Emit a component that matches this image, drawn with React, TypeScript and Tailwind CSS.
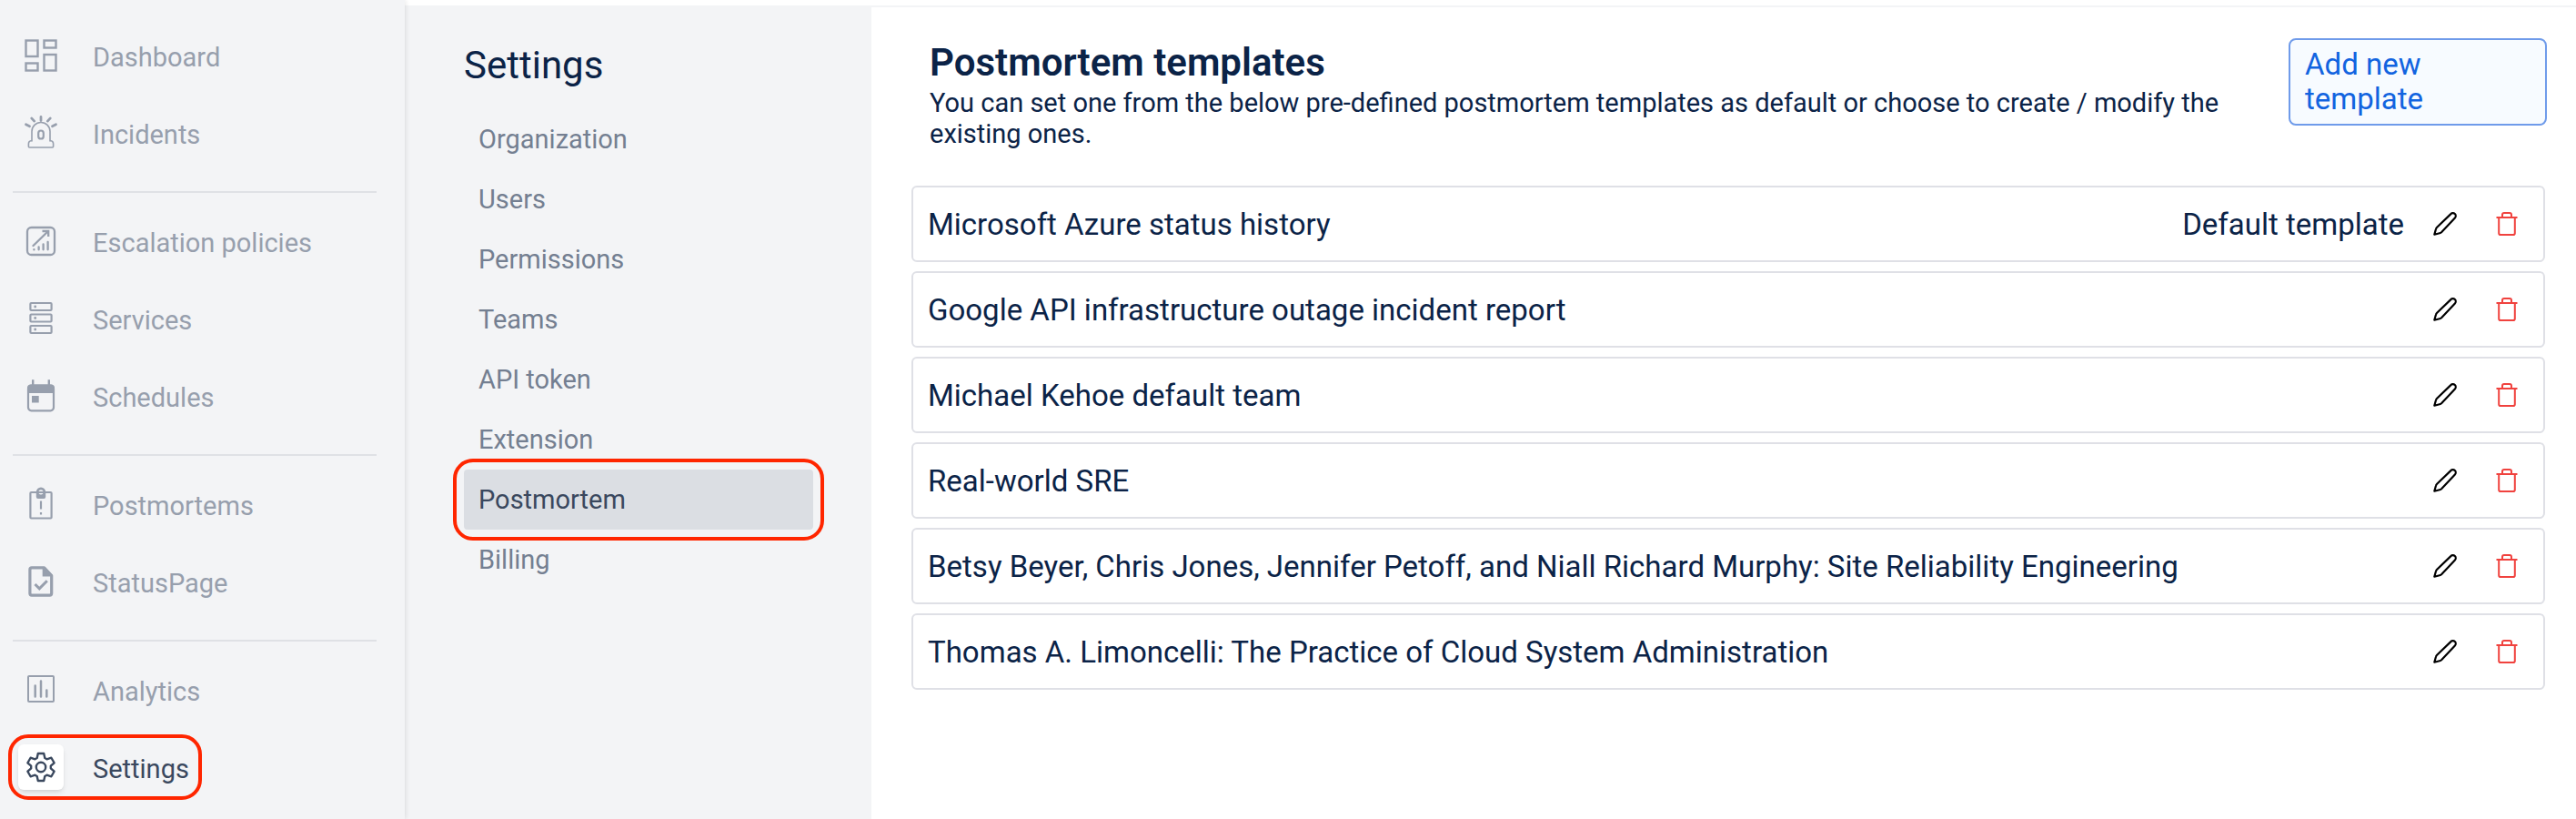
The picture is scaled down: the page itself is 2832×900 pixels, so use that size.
import type { ReactNode } from "react";

const stroke = { fill: "none", stroke: "currentColor" } as const;

function Glyph({ children }: { children: ReactNode }) {
  return (
    <svg viewBox="0 0 50 50" className="size-[50px]" aria-hidden="true">
      {children}
    </svg>
  );
}

const DashboardIcon = () => (
  <Glyph>
    <g {...stroke} strokeWidth="2.4">
      <rect x="8.5" y="8.5" width="13" height="17.5" />
      <rect x="28.5" y="8.5" width="13" height="8" />
      <rect x="8.5" y="33.5" width="13" height="8" />
      <rect x="28.5" y="24" width="13" height="17.5" />
    </g>
  </Glyph>
);

const SirenIcon = () => (
  <Glyph>
    <g {...stroke} strokeLinecap="round" strokeLinejoin="round">
      <path
        strokeWidth="1.6"
        d="M15 34V23.5a10 10 0 0 1 20 0V34M15 33.5c-2.5.3-3.6 1.6-3.6 3.5v3q0 1 1 1h25.200q1 0 1-1v-3c0-1.900-1.100-3.200-3.600-3.500"
      />
      <rect x="22.2" y="22.5" width="5.6" height="9" rx="2.8" strokeWidth="2.2" />
      <path strokeWidth="2.8" d="M25 7.5v4M14.700 8.900l3 3.200M35.300 8.900l-3 3.200M8.500 15.800l4 1.900M41.500 15.800l-4 1.900" />
    </g>
  </Glyph>
);

const EscalationIcon = () => (
  <Glyph>
    <g {...stroke} strokeWidth="2.3">
      <rect x="10" y="10" width="30" height="30" rx="4.5" />
      <path strokeLinecap="round" d="M16.500 30 32.500 14.500M17.400 34.200v.2M22.600 31.500v2.800M27.600 28.500v5.800M32.600 26v8.300" />
      <path d="M26.500 14h6.700v6" />
    </g>
  </Glyph>
);

const ServicesIcon = () => (
  <Glyph>
    {[8, 20.5, 33].map((y) => (
      <g key={y}>
        <rect x="13.4" y={y} width="23.2" height="8" rx="1" {...stroke} strokeWidth="2.2" />
        <circle cx="18.7" cy={y + 4} r="1.4" fill="currentColor" />
      </g>
    ))}
  </Glyph>
);

const ScheduleIcon = () => (
  <Glyph>
    <g {...stroke}>
      <rect x="11" y="13.5" width="28" height="27.8" rx="3.5" strokeWidth="2.2" />
      <path strokeWidth="2.4" d="M16.200 7.300v7M33.800 7.300v7" />
    </g>
    <path fill="currentColor" d="M10 22v-5.500a4 4 0 0 1 4-4h22a4 4 0 0 1 4 4V22zM15 25h7.700v7.400H15z" />
  </Glyph>
);

const PostmortemIcon = () => (
  <Glyph>
    <rect x="13.4" y="12" width="23.2" height="28.5" rx="1" {...stroke} strokeWidth="2.2" />
    <path
      fill="currentColor"
      fillRule="evenodd"
      d="M19.800 11.600a5.200 5.200 0 0 1 10.400 0V17q0 2-2 2h-6.400q-2 0-2-2zM25 9.200a2.600 2.600 0 1 0 0 5.200 2.600 2.600 0 0 0 0-5.200z"
    />
    <path strokeWidth="2.2" {...stroke} d="M25 21.500v9M25 34v2.400" />
  </Glyph>
);

const StatusPageIcon = () => (
  <Glyph>
    <g {...stroke} strokeWidth="3.2" strokeLinejoin="round">
      <path d="M14.900 9.900h13.700l8.100 8.600v19.600q0 2-2 2H14.900q-2 0-2-2V11.900q0-2 2-2z" />
      <path strokeWidth="3" strokeLinejoin="miter" d="m18.500 28 4.800 4.800 8.500-8.500" />
    </g>
    <path fill="currentColor" d="M26.700 9v10.500H38v-1.500L29.500 9z" />
  </Glyph>
);

const AnalyticsIcon = () => (
  <Glyph>
    <rect x="11" y="10" width="28" height="28" rx="1" {...stroke} strokeWidth="2" />
    <path {...stroke} strokeWidth="2.5" strokeLinecap="round" d="M18.700 20.500v12M25 15.500v17M31.300 25.500v7" />
  </Glyph>
);

const toothProfile: [number, number][] = [
  [-4.3, -10],
  [-3.2, -15],
  [3.2, -15],
  [4.3, -10],
];
const gearPoints = [0, 60, 120, 180, 240, 300]
  .flatMap((deg) => {
    const c = Math.cos((deg * Math.PI) / 180);
    const s = Math.sin((deg * Math.PI) / 180);
    return toothProfile.map(([x, y]) => `${(25 + x * c - y * s).toFixed(2)},${(25 + x * s + y * c).toFixed(2)}`);
  })
  .join(" ");

const GearIcon = () => (
  <Glyph>
    <g {...stroke} strokeWidth="2.4" strokeLinejoin="round">
      <polygon points={gearPoints} />
      <circle cx="25" cy="25" r="5.2" />
    </g>
  </Glyph>
);

const PencilIcon = () => (
  <svg viewBox="0 0 26 26" className="size-[26px]" {...stroke} strokeWidth="2.2" strokeLinejoin="round" aria-hidden="true">
    <path d="M19.400 2.100 4.200 16.800Q3.200 17.800 2.900 19L1.300 24.700 7 23.300Q8.300 23 9.300 22L23.900 6.500A3.050 3.050 0 0 0 19.400 2.100Z" />
  </svg>
);

const TrashIcon = () => (
  <svg viewBox="0 0 24 26" className="h-[26px] w-6" {...stroke} strokeWidth="2" aria-hidden="true">
    <path d="M.5 6h23M3.200 6v17.200q0 1.800 1.800 1.800h14q1.800 0 1.800-1.800V6M7 6V3q0-2 2-2h6q2 0 2 2v3" />
  </svg>
);

type NavItem = { label: string; icon: () => ReactNode; active?: boolean };

const navGroups: NavItem[][] = [
  [
    { label: "Dashboard", icon: DashboardIcon },
    { label: "Incidents", icon: SirenIcon },
  ],
  [
    { label: "Escalation policies", icon: EscalationIcon },
    { label: "Services", icon: ServicesIcon },
    { label: "Schedules", icon: ScheduleIcon },
  ],
  [
    { label: "Postmortems", icon: PostmortemIcon },
    { label: "StatusPage", icon: StatusPageIcon },
  ],
  [
    { label: "Analytics", icon: AnalyticsIcon },
    { label: "Settings", icon: GearIcon, active: true },
  ],
];

const settingsItems = ["Organization", "Users", "Permissions", "Teams", "API token", "Extension", "Postmortem", "Billing"];

const templates = [
  "Microsoft Azure status history",
  "Google API infrastructure outage incident report",
  "Michael Kehoe default team",
  "Real-world SRE",
  "Betsy Beyer, Chris Jones, Jennifer Petoff, and Niall Richard Murphy: Site Reliability Engineering",
  "Thomas A. Limoncelli: The Practice of Cloud System Administration",
];

function Sidebar() {
  return (
    <nav
      aria-label="Main"
      className="relative z-10 w-[445px] shrink-0 bg-[#f3f4f6] pt-9 shadow-[0_0_6px_rgba(0,0,0,0.14)]"
    >
      {navGroups.map((group, i) => (
        <div key={group[0].label}>
          {i > 0 && <hr className="mt-[39px] mr-[31px] mb-7 ml-3.5 border-t-2 border-[#dfe1e5]" />}
          <ul className="flex flex-col items-start gap-[35px] pl-5">
            {group.map(({ label, icon: Icon, active }) => (
              <li key={label} className="relative">
                <a
                  href="#"
                  aria-current={active ? "page" : undefined}
                  className={`flex items-center gap-8 ${active ? "text-[#3a485e]" : "text-[#979fad]"}`}
                >
                  <span className={active ? "rounded-md bg-white shadow-md" : ""}>
                    <Icon />
                  </span>
                  <span className="pt-1 text-[29px] leading-[34px]">{label}</span>
                </a>
                {active && (
                  <span className="pointer-events-none absolute -inset-y-[11px] -right-3.5 -left-[11px] rounded-[22px] border-4 border-[#ff2600]" />
                )}
              </li>
            ))}
          </ul>
        </div>
      ))}
    </nav>
  );
}

function SettingsMenu() {
  return (
    <nav aria-label="Settings" className="w-[513px] shrink-0 bg-[#f3f4f6] pt-[42px] pr-16 pl-[65px]">
      <h2 className="mb-6 text-[42px] leading-12 text-[#0b2347]">Settings</h2>
      <ul>
        {settingsItems.map((label) => {
          const active = label === "Postmortem";
          return (
            <li key={label} className="relative">
              <a
                href="#"
                aria-current={active ? "page" : undefined}
                className={`flex h-[66px] items-center rounded px-4 pt-0.5 text-[29px] ${
                  active ? "bg-[#dbdee3] text-[#3a485e]" : "text-[#747f91]"
                }`}
              >
                {label}
              </a>
              {active && (
                <span className="pointer-events-none absolute -inset-3 rounded-[22px] border-4 border-[#ff2600]" />
              )}
            </li>
          );
        })}
      </ul>
    </nav>
  );
}

function TemplateRow({ name, isDefault }: { name: string; isDefault: boolean }) {
  return (
    <li className="flex h-[84px] items-center rounded-md border-2 border-[#dfe0e6] pr-7 pl-4 text-[33px] text-[#0b2347]">
      <span className="flex-1 pt-0.5">{name}</span>
      {isDefault && <span className="pt-0.5">Default template</span>}
      <button type="button" aria-label={`Edit ${name}`} className="ml-8 text-black">
        <PencilIcon />
      </button>
      <button type="button" aria-label={`Delete ${name}`} className="ml-[43px] text-[#f0423e]">
        <TrashIcon />
      </button>
    </li>
  );
}

export default function App() {
  return (
    <div className="flex min-h-screen bg-white font-['Roboto',sans-serif]">
      <Sidebar />
      <div className="flex min-w-0 flex-1 flex-col">
        <div className="h-1.5 shrink-0" />
        <div className="flex flex-1">
          <SettingsMenu />
          <main className="min-w-0 flex-1 border-t-2 border-[#f3f4f6] pt-[34px] pr-8 pl-11 text-[#0b2347]">
            <header className="flex items-start justify-between pl-5">
              <div className="flex-1 pr-14">
                <h1 className="text-[42px] leading-[54px] font-semibold">Postmortem templates</h1>
                <p className="text-[29px] leading-[34px]">
                  You can set one from the below pre-defined postmortem templates as default or choose to create /
                  modify the existing ones.
                </p>
              </div>
              <button
                type="button"
                className="w-[284px] shrink-0 rounded-lg border-2 border-[#6f9bea] bg-[#f7fbff] py-2 pr-24 pl-4 text-left text-[33px] leading-[38px] text-[#1264e0]"
              >
                Add new template
              </button>
            </header>
            <ul className="mt-10 mr-0.5 flex flex-col gap-2.5">
              {templates.map((name, i) => (
                <TemplateRow key={name} name={name} isDefault={i === 0} />
              ))}
            </ul>
          </main>
        </div>
      </div>
    </div>
  );
}
